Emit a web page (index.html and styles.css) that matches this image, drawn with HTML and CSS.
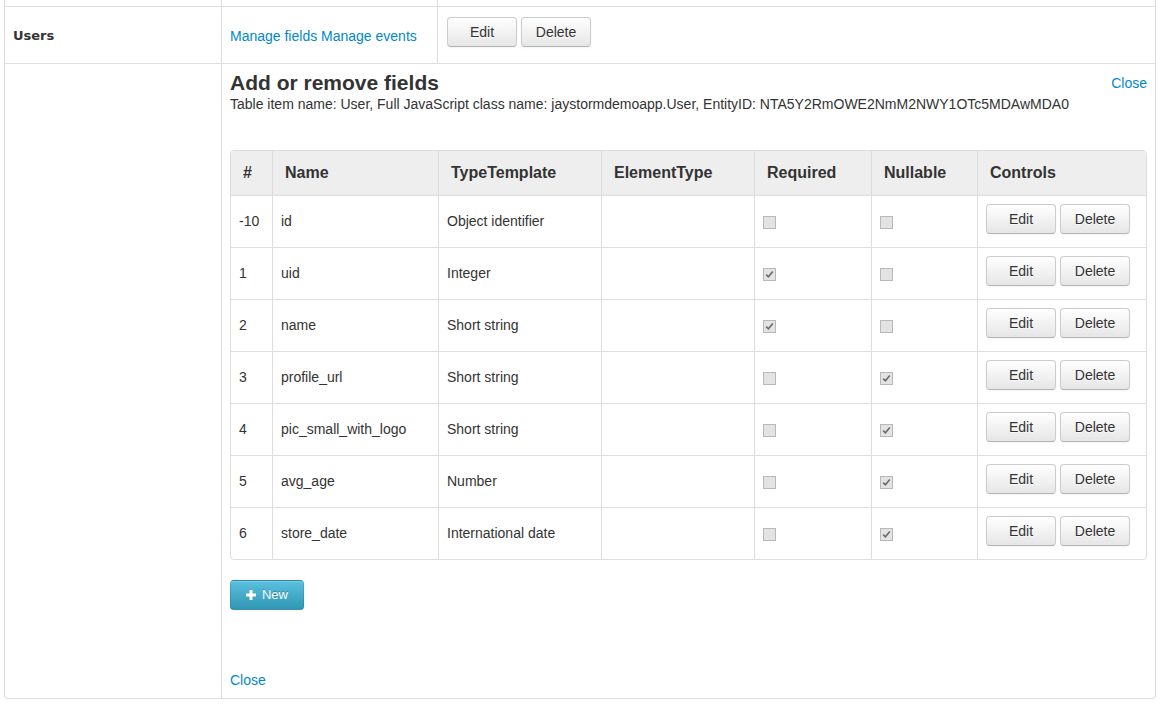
FILE: index.html
```html
<!DOCTYPE html>
<html>
<head>
<meta charset="utf-8">
<title>Users - fields</title>
<link rel="stylesheet" href="styles.css">
</head>
<body>
<div class="page">
  <div class="grid">
    <div class="cell"></div>
    <div class="cell vl"></div>
    <div class="cell vl"></div>

    <div class="cell row users">Users</div>
    <div class="cell row vl links"><span><a href="#">Manage fields</a> <a href="#">Manage events</a></span></div>
    <div class="cell row vl actions"><button class="btn">Edit</button><button class="btn">Delete</button></div>

    <div class="cell row"></div>
    <div class="cell row vl span2 panel">
      <div class="panel-head">
        <div>
          <h3 class="title">Add or remove fields</h3>
          <p class="meta">Table item name: User, Full JavaScript class name: jaystormdemoapp.User, EntityID: NTA5Y2RmOWE2NmM2NWY1OTc5MDAwMDA0</p>
        </div>
        <a href="#" class="close-top">Close</a>
      </div>

      <table class="fields">
        <thead>
          <tr>
            <th class="w-num">#</th>
            <th class="w-name">Name</th>
            <th class="w-type">TypeTemplate</th>
            <th class="w-elem">ElementType</th>
            <th class="w-req">Required</th>
            <th class="w-null">Nullable</th>
            <th>Controls</th>
          </tr>
        </thead>
        <tbody>
          <tr>
            <td>-10</td><td>id</td><td>Object identifier</td><td></td>
            <td><span class="cb"></span></td><td><span class="cb"></span></td>
            <td class="ctl"><button class="btn">Edit</button><button class="btn">Delete</button></td>
          </tr>
          <tr>
            <td>1</td><td>uid</td><td>Integer</td><td></td>
            <td><span class="cb"><svg viewBox="0 0 11 11" width="11" height="11"><path d="M2.2 5.6 L4.4 7.8 L8.8 2.6" fill="none" stroke="#6a6a6a" stroke-width="1.6"/></svg></span></td><td><span class="cb"></span></td>
            <td class="ctl"><button class="btn">Edit</button><button class="btn">Delete</button></td>
          </tr>
          <tr>
            <td>2</td><td>name</td><td>Short string</td><td></td>
            <td><span class="cb"><svg viewBox="0 0 11 11" width="11" height="11"><path d="M2.2 5.6 L4.4 7.8 L8.8 2.6" fill="none" stroke="#6a6a6a" stroke-width="1.6"/></svg></span></td><td><span class="cb"></span></td>
            <td class="ctl"><button class="btn">Edit</button><button class="btn">Delete</button></td>
          </tr>
          <tr>
            <td>3</td><td>profile_url</td><td>Short string</td><td></td>
            <td><span class="cb"></span></td><td><span class="cb"><svg viewBox="0 0 11 11" width="11" height="11"><path d="M2.2 5.6 L4.4 7.8 L8.8 2.6" fill="none" stroke="#6a6a6a" stroke-width="1.6"/></svg></span></td>
            <td class="ctl"><button class="btn">Edit</button><button class="btn">Delete</button></td>
          </tr>
          <tr>
            <td>4</td><td>pic_small_with_logo</td><td>Short string</td><td></td>
            <td><span class="cb"></span></td><td><span class="cb"><svg viewBox="0 0 11 11" width="11" height="11"><path d="M2.2 5.6 L4.4 7.8 L8.8 2.6" fill="none" stroke="#6a6a6a" stroke-width="1.6"/></svg></span></td>
            <td class="ctl"><button class="btn">Edit</button><button class="btn">Delete</button></td>
          </tr>
          <tr>
            <td>5</td><td>avg_age</td><td>Number</td><td></td>
            <td><span class="cb"></span></td><td><span class="cb"><svg viewBox="0 0 11 11" width="11" height="11"><path d="M2.2 5.6 L4.4 7.8 L8.8 2.6" fill="none" stroke="#6a6a6a" stroke-width="1.6"/></svg></span></td>
            <td class="ctl"><button class="btn">Edit</button><button class="btn">Delete</button></td>
          </tr>
          <tr>
            <td>6</td><td>store_date</td><td>International date</td><td></td>
            <td><span class="cb"></span></td><td><span class="cb"><svg viewBox="0 0 11 11" width="11" height="11"><path d="M2.2 5.6 L4.4 7.8 L8.8 2.6" fill="none" stroke="#6a6a6a" stroke-width="1.6"/></svg></span></td>
            <td class="ctl"><button class="btn">Edit</button><button class="btn">Delete</button></td>
          </tr>
        </tbody>
      </table>

      <button class="btn-new"><svg class="plus" viewBox="0 0 10 10" width="10" height="10"><path d="M3.5 0h3v3.5h3.5v3h-3.5v3.5h-3v-3.5h-3.5v-3h3.5z" fill="#fff"/></svg><span>New</span></button>

      <a href="#" class="close-bottom">Close</a>
    </div>
  </div>
</div>
</body>
</html>
```

FILE: styles.css
```css
html, body {
  background: #fff;
}
body {
  margin: 0;
  font-family: "Liberation Sans", Arial, sans-serif;
  font-size: 14px;
  line-height: 20px;
  color: #333;
}
a {
  color: #0088cc;
  text-decoration: none;
}
.page {
  padding: 0 4px;
}
.grid {
  display: grid;
  grid-template-columns: 216px 216px 1fr;
  grid-template-rows: 6px 57px auto;
  border: 1px solid #ddd;
  border-top: none;
  border-radius: 0 0 4px 4px;
}
.cell {
  box-sizing: border-box;
  min-width: 0;
}
.vl {
  border-left: 1px solid #ddd;
}
.row {
  border-top: 1px solid #ddd;
}
.users {
  display: flex;
  align-items: center;
  padding: 1px 8px 0;
  font-family: "DejaVu Sans", Verdana, sans-serif;
  font-weight: bold;
  font-size: 13px;
  color: #333;
}
.links {
  display: flex;
  align-items: center;
  padding: 1px 8px 0;
}
.actions {
  display: flex;
  align-items: flex-start;
  gap: 4px;
  padding: 10px 9px 0;
}
.span2 {
  grid-column: 2 / 4;
}
.panel {
  padding: 7px 8px 8px;
}
.panel-head {
  display: flex;
  justify-content: space-between;
  align-items: flex-start;
}
.title {
  margin: 0;
  font-size: 21px;
  line-height: 24px;
  font-weight: bold;
  color: #333;
}
.meta {
  margin: 0;
  font-size: 14px;
  line-height: 18px;
}
.close-top {
  margin-top: 2px;
}
.btn {
  box-sizing: border-box;
  width: 70px;
  height: 30px;
  padding: 0;
  font-family: "Liberation Sans", Arial, sans-serif;
  font-size: 14px;
  line-height: 20px;
  color: #333;
  text-shadow: 0 1px 1px rgba(255, 255, 255, 0.75);
  background: linear-gradient(to bottom, #ffffff, #e6e6e6);
  border: 1px solid #ccc;
  border-bottom-color: #b3b3b3;
  border-radius: 4px;
  box-shadow: inset 0 1px 0 rgba(255, 255, 255, 0.2), 0 1px 2px rgba(0, 0, 0, 0.05);
  cursor: pointer;
}
.fields {
  margin-top: 37px;
  width: 100%;
  table-layout: fixed;
  border-collapse: separate;
  border-spacing: 0;
  border: 1px solid #ddd;
  border-radius: 4px;
}
.fields th,
.fields td {
  box-sizing: border-box;
  text-align: left;
}
.fields th {
  background: #eee;
  font-size: 16px;
  line-height: 20px;
  font-weight: bold;
  padding: 12px;
  height: 44px;
}
.fields th:first-child {
  border-top-left-radius: 3px;
}
.fields th:last-child {
  border-top-right-radius: 3px;
}
.fields th + th,
.fields td + td {
  border-left: 1px solid #ddd;
}
.fields td {
  border-top: 1px solid #ddd;
  height: 52px;
  padding: 0 8px 1px;
  vertical-align: middle;
  white-space: nowrap;
}
.fields td.ctl {
  vertical-align: top;
  padding-top: 8px;
}
.ctl .btn + .btn {
  margin-left: 4px;
}
.w-num { width: 41px; }
.w-name { width: 166px; }
.w-type { width: 163px; }
.w-elem { width: 153px; }
.w-req { width: 117px; }
.w-null { width: 106px; }
.cb {
  display: inline-flex;
  align-items: center;
  justify-content: center;
  box-sizing: border-box;
  width: 13px;
  height: 13px;
  border: 1px solid #b8b8b8;
  background: #e3e3e3;
  vertical-align: middle;
}
.cb svg {
  display: block;
}
.btn-new {
  display: flex;
  align-items: center;
  justify-content: center;
  gap: 6px;
  box-sizing: border-box;
  width: 74px;
  height: 30px;
  margin-top: 20px;
  padding: 0;
  font-family: "Liberation Sans", Arial, sans-serif;
  font-size: 13px;
  line-height: 20px;
  color: #fff;
  text-shadow: 0 -1px 0 rgba(0, 0, 0, 0.25);
  background: linear-gradient(to bottom, #5bc0de, #2f96b4);
  border: 1px solid rgba(0, 0, 0, 0.1);
  border-bottom-color: rgba(0, 0, 0, 0.25);
  border-radius: 4px;
  box-shadow: inset 0 1px 0 rgba(255, 255, 255, 0.2), 0 1px 2px rgba(0, 0, 0, 0.05);
  cursor: pointer;
}
.plus {
  display: block;
}
.close-bottom {
  display: block;
  width: max-content;
  margin-top: 60px;
}
```
